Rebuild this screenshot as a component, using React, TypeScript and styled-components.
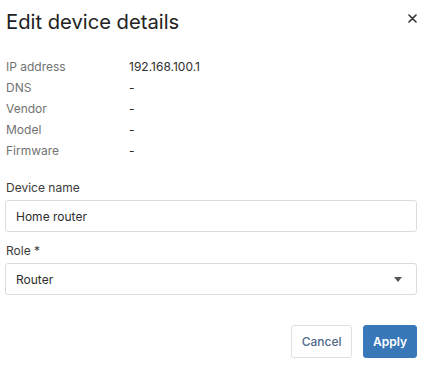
import React, { useState } from 'react'
import styled, { createGlobalStyle } from 'styled-components'

const GlobalStyle = createGlobalStyle`
	body {
		margin: 0;
		background: #ffffff;
		font-family: Inter, 'Noto Sans', sans-serif;
		color: #2b2b2b;
	}
`

const Dialog = styled.div`
	width: 427px;
	height: 375px;
	box-sizing: border-box;
	padding: 0 11px 0 6px;
	display: flex;
	flex-direction: column;
`

const Header = styled.header`
	display: flex;
	justify-content: space-between;
	align-items: flex-start;
	height: 56px;
`

const Title = styled.h2`
	margin: 10px 0 0;
	font-size: 20.2px;
	font-weight: 400;
	line-height: 24px;
	color: #222;
`

const CloseButton = styled.button`
	border: none;
	background: none;
	padding: 0;
	margin: 11px -3px 0 0;
	width: 14px;
	height: 14px;
	display: flex;
	align-items: center;
	justify-content: center;
	cursor: pointer;
`

const InfoGrid = styled.dl`
	display: grid;
	grid-template-columns: 123px 1fr;
	grid-auto-rows: 21px;
	margin: 0;
	font-size: 12px;
	line-height: 21px;
`

const InfoLabel = styled.dt`
	color: #727272;
`

const InfoValue = styled.dd`
	margin: 0;
	color: #2e2e2e;
`

const Field = styled.div`
	display: flex;
	flex-direction: column;
	gap: 5px;
`

const FieldLabel = styled.label`
	font-size: 12px;
	line-height: 15px;
	color: #3a3a3a;
`

const TextInput = styled.input`
	box-sizing: border-box;
	width: 412px;
	margin-left: -1px;
	height: 32px;
	border: 1px solid #d9dde2;
	border-radius: 3px;
	padding: 0 10px;
	font: inherit;
	font-size: 12px;
	color: #2e2e2e;
	outline: none;
`

const SelectBox = styled.div`
	box-sizing: border-box;
	width: 412px;
	margin-left: -1px;
	height: 32px;
	border: 1px solid #d9dde2;
	border-radius: 3px;
	padding: 0 14px 0 10px;
	font-size: 12px;
	color: #2e2e2e;
	display: flex;
	align-items: center;
	justify-content: space-between;
`

const Caret = styled.span`
	width: 0;
	height: 0;
	border-left: 4.5px solid transparent;
	border-right: 4.5px solid transparent;
	border-top: 5px solid #555;
`

const Fields = styled.div`
	display: flex;
	flex-direction: column;
	gap: 11px;
	margin-top: 19px;
`

const Footer = styled.footer`
	display: flex;
	justify-content: flex-end;
	gap: 11px;
	margin-top: 30px;
	margin-right: -1px;
`

const Button = styled.button<{ $primary?: boolean }>`
	box-sizing: border-box;
	height: 33px;
	padding: 0 ${(p) => (p.$primary ? '9px' : '9.5px')};
	border-radius: 3px;
	font-family: Inter, 'Noto Sans', sans-serif;
	font-size: 12px;
	font-weight: ${(p) => (p.$primary ? 600 : 500)};
	border: 1px solid ${(p) => (p.$primary ? '#3877b8' : '#dde1e6')};
	background: ${(p) => (p.$primary ? '#3877b8' : '#fff')};
	color: ${(p) => (p.$primary ? '#fff' : '#52698a')};
	cursor: pointer;
`

const details = [
	['IP address', '192.168.100.1'],
	['DNS', '-'],
	['Vendor', '-'],
	['Model', '-'],
	['Firmware', '-'],
]

export default function App() {
	const [name, setName] = useState('Home router')

	return (
		<>
			<GlobalStyle />
			<Dialog>
				<Header>
					<Title>Edit device details</Title>
					<CloseButton aria-label='Close'>
						<svg width='9' height='9' viewBox='0 0 9 9'>
							<path d='M1 1 L8 8 M8 1 L1 8' stroke='#333' strokeWidth='1.6' strokeLinecap='round' />
						</svg>
					</CloseButton>
				</Header>
				<InfoGrid>
					{details.map(([label, value]) => (
						<React.Fragment key={label}>
							<InfoLabel>{label}</InfoLabel>
							<InfoValue>{value}</InfoValue>
						</React.Fragment>
					))}
				</InfoGrid>
				<Fields>
					<Field>
						<FieldLabel>Device name</FieldLabel>
						<TextInput value={name} onChange={(e) => setName(e.target.value)} />
					</Field>
					<Field>
						<FieldLabel>Role *</FieldLabel>
						<SelectBox>
							<span>Router</span>
							<Caret />
						</SelectBox>
					</Field>
				</Fields>
				<Footer>
					<Button>Cancel</Button>
					<Button $primary>Apply</Button>
				</Footer>
			</Dialog>
		</>
	)
}
